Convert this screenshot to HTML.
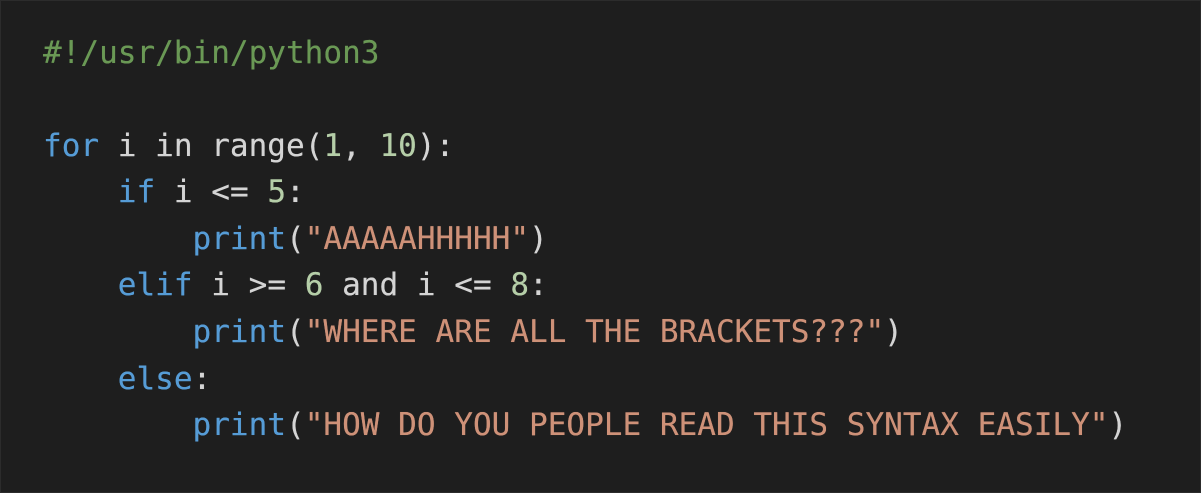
<!DOCTYPE html>
<html><head><style>
html,body{margin:0;padding:0;background:#1e1e1e;width:1201px;height:493px;overflow:hidden}
.f{position:absolute;left:0;top:0;width:1199px;height:491px;border:1px solid #2c2c2c;background:#1e1e1e}
pre{position:absolute;left:43px;top:29.5px;margin:0;font-family:"DejaVu Sans Mono",monospace;font-size:31.05px;line-height:46.6px;color:#d4d4d4;text-shadow:0 0 0.4px currentColor}
.c{color:#6a9955}.k{color:#569cd6}.n{color:#b5cea8}.s{color:#ce9178}
</style></head><body><div class="f"></div>
<pre><span class="c">#!/usr/bin/python3</span>

<span class="k">for</span> i in range(<span class="n">1</span>, <span class="n">10</span>):
    <span class="k">if</span> i &lt;= <span class="n">5</span>:
        <span class="k">print</span>(<span class="s">"AAAAAHHHHH"</span>)
    <span class="k">elif</span> i &gt;= <span class="n">6</span> and i &lt;= <span class="n">8</span>:
        <span class="k">print</span>(<span class="s">"WHERE ARE ALL THE BRACKETS???"</span>)
    <span class="k">else</span>:
        <span class="k">print</span>(<span class="s">"HOW DO YOU PEOPLE READ THIS SYNTAX EASILY"</span>)</pre>
</body></html>
